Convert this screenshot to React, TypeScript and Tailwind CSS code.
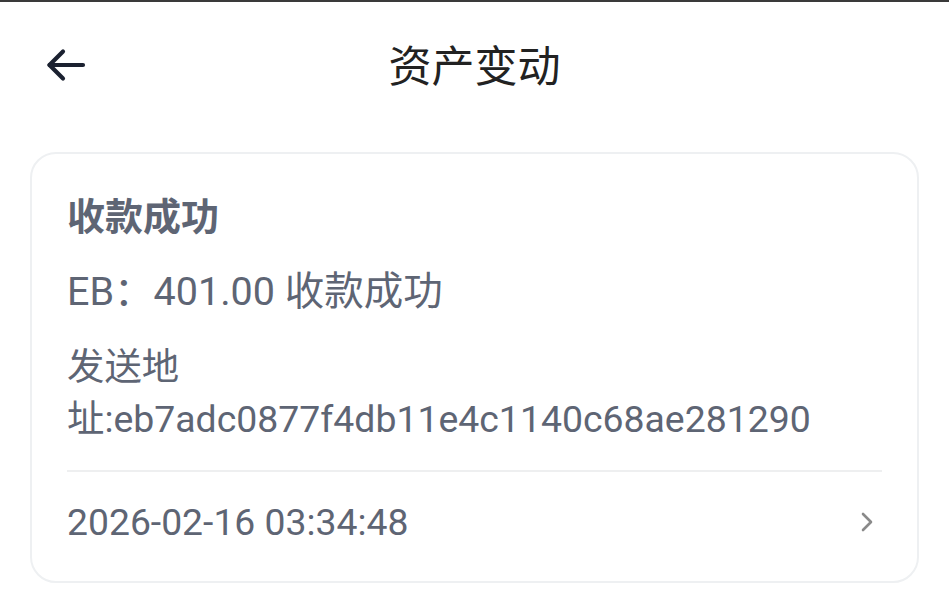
import React from "react";

export default function App() {
  return (
    <div
      className="w-[949px] h-[608px] bg-white overflow-hidden"
      style={{ fontFamily: 'Roboto, "Noto Sans CJK SC", sans-serif' }}
    >
      <div className="h-[2px] bg-[#3a3a3a]" />
      <div className="relative h-[128px] flex items-center justify-center">
        <svg
          className="absolute left-[46px] top-[46px]"
          width="40"
          height="34"
          viewBox="0 0 40 34"
          fill="none"
          stroke="#1b2130"
          strokeWidth="4.2"
          strokeLinecap="round"
          strokeLinejoin="round"
        >
          <path d="M37 17H3.5" />
          <path d="M17 3.5L3.5 17L17 30.5" />
        </svg>
        <span
          className="text-[43px] leading-[52px] text-[#222222] -mt-[6px]"
          style={{ fontFamily: '"Noto Sans CJK SC", sans-serif' }}
        >
          资产变动
        </span>
      </div>
      <div className="px-[30px] mt-[22px]">
        <div className="w-[889px] border-2 border-[#eef0f2] rounded-[26px] px-[35px] pt-[37px] pb-[33px]">
          <div className="text-[38px] leading-[52px] font-bold text-[#5e6574]">
            收款成功
          </div>
          <div className="mt-[23px] text-[39.5px] leading-[52px] text-[#5e6574]">
            EB：401.00 收款成功
          </div>
          <div className="mt-[23px] text-[37.4px] leading-[52px] text-[#5e6574]">
            发送地址:eb7adc0877f4db11e4c1140c68ae281290
          </div>
          <div className="mt-[25px] h-[2px] bg-[#eeeff0]" />
          <div className="mt-[24px] flex items-center justify-between">
            <span className="text-[37.3px] leading-[52px] text-[#5e6574]">
              2026-02-16 03:34:48
            </span>
            <svg
              className="mr-[8px]"
              width="14"
              height="22"
              viewBox="0 0 14 22"
              fill="none"
              stroke="#8a8a8a"
              strokeWidth="2.6"
              strokeLinecap="round"
              strokeLinejoin="round"
            >
              <path d="M3 3L11 11L3 19" />
            </svg>
          </div>
        </div>
      </div>
    </div>
  );
}
